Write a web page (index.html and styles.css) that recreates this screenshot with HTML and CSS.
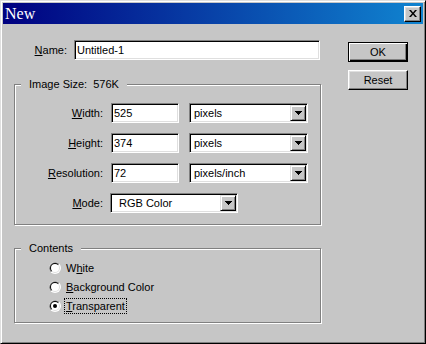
FILE: index.html
```html
<!DOCTYPE html>
<html>
<head>
<meta charset="utf-8">
<link rel="stylesheet" href="styles.css">
</head>
<body>
<div class="window">
  <div class="titlebar">
    <span class="title">New</span>
    <div class="close"><svg width="8" height="7" viewBox="0 0 8 7"><path d="M0 0h2l2 2.5 2-2.5h2L5 3.5 8 7H6L4 4.5 2 7H0l3-3.5z" fill="#000"/></svg></div>
  </div>
  <div class="body">
    <div class="main">
      <div class="name-row">
        <span class="lbl name-lbl"><u>N</u>ame:</span>
        <div class="field name-field">Untitled-1</div>
      </div>
      <fieldset class="group size-group">
        <legend>Image Size:&nbsp; 576K</legend>
        <div class="row">
          <span class="lbl"><u>W</u>idth:</span>
          <div class="field num">525</div>
          <div class="select unit"><span class="val">pixels</span><span class="drop"><svg width="7" height="4" viewBox="0 0 7 4"><path d="M0 0h7v1H0zM1 1h5v1H1zM2 2h3v1H2zM3 3h1v1H3z" fill="#000"/></svg></span></div>
        </div>
        <div class="row">
          <span class="lbl"><u>H</u>eight:</span>
          <div class="field num">374</div>
          <div class="select unit"><span class="val">pixels</span><span class="drop"><svg width="7" height="4" viewBox="0 0 7 4"><path d="M0 0h7v1H0zM1 1h5v1H1zM2 2h3v1H2zM3 3h1v1H3z" fill="#000"/></svg></span></div>
        </div>
        <div class="row">
          <span class="lbl"><u>R</u>esolution:</span>
          <div class="field num">72</div>
          <div class="select unit"><span class="val">pixels/inch</span><span class="drop"><svg width="7" height="4" viewBox="0 0 7 4"><path d="M0 0h7v1H0zM1 1h5v1H1zM2 2h3v1H2zM3 3h1v1H3z" fill="#000"/></svg></span></div>
        </div>
        <div class="row">
          <span class="lbl mode-lbl"><u>M</u>ode:</span>
          <div class="select mode"><span class="val">RGB Color</span><span class="drop"><svg width="7" height="4" viewBox="0 0 7 4"><path d="M0 0h7v1H0zM1 1h5v1H1zM2 2h3v1H2zM3 3h1v1H3z" fill="#000"/></svg></span></div>
        </div>
      </fieldset>
      <fieldset class="group contents-group">
        <legend>Contents</legend>
        <div class="radio-row">
          <svg class="radio" width="12" height="12" viewBox="0 0 12 12"><circle cx="6" cy="6" r="6" fill="#fff"/><path d="M1.76 10.24A6 6 0 0 1 10.24 1.76Z" fill="#808080"/><circle cx="6" cy="6" r="5" fill="#dfdfdf"/><path d="M2.46 9.54A5 5 0 0 1 9.54 2.46Z" fill="#000"/><circle cx="6" cy="6" r="4" fill="#fff"/></svg>
          <span class="rlabel">W<u>h</u>ite</span>
        </div>
        <div class="radio-row">
          <svg class="radio" width="12" height="12" viewBox="0 0 12 12"><circle cx="6" cy="6" r="6" fill="#fff"/><path d="M1.76 10.24A6 6 0 0 1 10.24 1.76Z" fill="#808080"/><circle cx="6" cy="6" r="5" fill="#dfdfdf"/><path d="M2.46 9.54A5 5 0 0 1 9.54 2.46Z" fill="#000"/><circle cx="6" cy="6" r="4" fill="#fff"/></svg>
          <span class="rlabel"><u>B</u>ackground Color</span>
        </div>
        <div class="radio-row">
          <svg class="radio" width="12" height="12" viewBox="0 0 12 12"><circle cx="6" cy="6" r="6" fill="#fff"/><path d="M1.76 10.24A6 6 0 0 1 10.24 1.76Z" fill="#808080"/><circle cx="6" cy="6" r="5" fill="#dfdfdf"/><path d="M2.46 9.54A5 5 0 0 1 9.54 2.46Z" fill="#000"/><circle cx="6" cy="6" r="4" fill="#fff"/><circle cx="6" cy="6" r="2" fill="#000"/></svg>
          <span class="rlabel focus"><u>T</u>ransparent</span>
        </div>
      </fieldset>
    </div>
    <div class="side">
      <div class="btn default">OK</div>
      <div class="btn">Reset</div>
    </div>
  </div>
</div>
</body>
</html>
```

FILE: styles.css
```css
* { box-sizing: border-box; }
html, body { margin: 0; padding: 0; }
body {
  width: 426px;
  height: 344px;
  background: #c6c6c6;
  font: 11px "Liberation Sans", Arial, sans-serif;
  color: #000;
}
.window {
  width: 426px;
  height: 344px;
  background: #c6c6c6;
  border: 1px solid;
  border-color: #dfdfdf #000 #000 #dfdfdf;
  box-shadow: inset 1px 1px #fff, inset -1px -1px #808080;
  padding: 2px;
  display: flex;
  flex-direction: column;
}
.titlebar {
  height: 21px;
  flex: none;
  background: linear-gradient(to right, #000080, #1084d0);
  display: flex;
  align-items: center;
  justify-content: space-between;
  padding: 0 2px 0 2px;
}
.title {
  font: 16px "Liberation Serif", serif;
  color: #fff;
  line-height: 21px;
}
.close {
  width: 17px;
  height: 16px;
  background: #c6c6c6;
  border: 1px solid;
  border-color: #fff #000 #000 #fff;
  box-shadow: inset -1px -1px #808080, inset 1px 1px #dfdfdf;
  display: flex;
  align-items: center;
  justify-content: center;
}
.close svg { display: block; }
.body {
  flex: 1;
  display: flex;
  padding-left: 11px;
}
.main { width: 307px; }
.side {
  margin-left: 27px;
  padding-top: 18px;
  display: flex;
  flex-direction: column;
  gap: 8px;
}
.btn {
  width: 60px;
  height: 20px;
  background: #c6c6c6;
  border: 1px solid;
  border-color: #fff #000 #000 #fff;
  box-shadow: inset -1px -1px #808080, inset 1px 1px #dfdfdf;
  display: flex;
  align-items: center;
  justify-content: center;
  line-height: 13px;
}
.btn.default {
  border-color: #000;
  box-shadow: inset 1px 1px #fff, inset -1px -1px #000, inset -2px -2px #808080;
}
.name-row {
  margin-top: 16px;
  display: flex;
  align-items: center;
  height: 20px;
}
.lbl {
  text-align: right;
  flex: none;
}
.name-lbl { width: 53px; margin-right: 7px; }
.field {
  height: 20px;
  background: #fff;
  border: 1px solid;
  border-color: #808080 #fff #fff #808080;
  box-shadow: inset 1px 1px #000, inset -1px -1px #dfdfdf;
  padding: 0 2px;
  line-height: 18px;
  white-space: nowrap;
}
.name-field { width: 246px; }
.group {
  margin: 0;
  padding: 0;
  min-width: 0;
  border: 1px solid #808080;
  box-shadow: inset 1px 1px #fff, 1px 1px #fff;
}
.group legend {
  margin-left: 6px;
  padding: 0 8px;
  line-height: 13px;
  background: #c6c6c6;
}
.size-group {
  margin-top: 18px;
  height: 147px;
  padding-top: 12px;
  display: flex;
  flex-direction: column;
  gap: 10px;
}
.row {
  display: flex;
  align-items: center;
  height: 20px;
}
.row .lbl { width: 88px; margin-right: 8px; }
.row .mode-lbl { margin-right: 7px; }
.num { width: 68px; }
.select {
  height: 20px;
  background: #fff;
  border: 1px solid;
  border-color: #808080 #fff #fff #808080;
  box-shadow: inset 1px 1px #000, inset -1px -1px #dfdfdf;
  padding: 1px;
  display: flex;
  align-items: center;
}
.select .val {
  flex: 1;
  padding-left: 3px;
  white-space: nowrap;
  line-height: 16px;
}
.unit { width: 119px; margin-left: 10px; }
.mode { width: 128px; }
.mode .val { padding-left: 7px; }
.drop {
  width: 16px;
  height: 16px;
  flex: none;
  background: #c6c6c6;
  border: 1px solid;
  border-color: #dfdfdf #000 #000 #dfdfdf;
  box-shadow: inset 1px 1px #fff, inset -1px -1px #808080;
  display: flex;
  align-items: center;
  justify-content: center;
}
.drop svg { display: block; }
.contents-group {
  margin-top: 17px;
  height: 81px;
  padding-top: 3px;
}
.radio-row {
  height: 19px;
  margin-left: 34px;
  display: flex;
  align-items: center;
}
.radio { display: block; flex: none; }
.rlabel {
  margin-left: 3px;
  height: 16px;
  line-height: 14px;
  padding: 0 1px;
  border: 1px dotted transparent;
}
.rlabel.focus { border-color: #000; }
```
